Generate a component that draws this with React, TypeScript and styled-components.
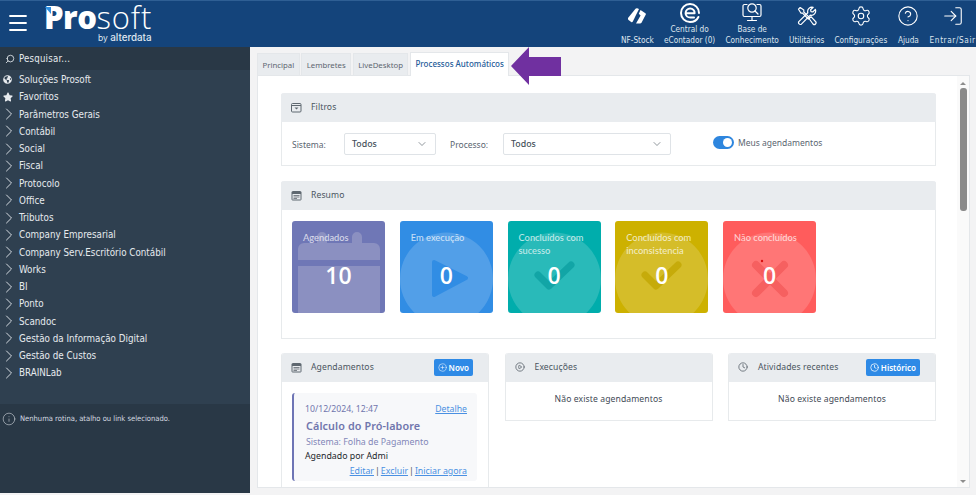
import React from "react";
import styled, { createGlobalStyle } from "styled-components";
import { FaGlobeAmericas, FaStar } from "react-icons/fa";
import { ChevronDown, ChevronRight, CircleHelp, Clock, Info, LogIn, Menu, Search, Settings, PlayCircle, CirclePlus } from "lucide-react";

const Global = createGlobalStyle`
  html, body { margin: 0; padding: 0; width: 976px; height: 495px; overflow: hidden; background: #fff; }
  * { box-sizing: border-box; }
  body { font-family: "Noto Sans", "Open Sans", sans-serif; }
`;

const tahoma = `"DejaVu Sans Condensed", "Noto Sans", sans-serif`;

const Page = styled.div`
  width: 976px; height: 495px; display: flex; flex-direction: column; overflow: hidden;
  position: relative; background: #f3f3f4;
`;
const Header = styled.header`
  height: 47px; flex: none; display: flex; background: #14447b; border-top: 1px solid #2f5f94; color: #fff;
`;
const Burger = styled.div`
  width: 44px; flex: none; padding: 10px 0 0 6px; color: #fff;
`;
const Logo = styled.div`
  width: 577px; flex: none; display: flex; flex-direction: column; position: relative; padding-top: 1px;
`;
const LogoWord = styled.div`
  font-family: "Open Sans", sans-serif; font-size: 31px; line-height: 31px; font-weight: 300; letter-spacing: .9px; color: #fff; height: 31px;
  b { font-weight: 800; letter-spacing: -.5px; }
`;
const LogoBy = styled.div`
  font-family: "Inter", sans-serif; font-size: 8.5px; line-height: 10px; height: 10px; color: #dfe7f0; padding-left: 54px; white-space: nowrap;
  b { font-weight: 500; font-size: 9.8px; }
`;
const Notch = styled.i`
  position: absolute; left: 1px; top: 6px; width: 6px; height: 7px; background: #2f8ee0; clip-path: polygon(0 0, 100% 0, 100% 100%);
`;
const Nav = styled.nav`
  display: flex; gap: 10.2px; flex: none;
`;
const NavItem = styled.div`
  display: flex; flex-direction: column; align-items: center; height: 46px; padding-bottom: 1px; flex: none;
`;
const NavIcon = styled.div<{ $two?: boolean }>`
  height: ${p => (p.$two ? 24 : 30)}px; display: flex; align-items: center; justify-content: center; color: #fff;
`;
const NavLabel = styled.div<{ $wide?: boolean }>`
  margin-top: auto; font-family: ${tahoma}; font-size: 8.2px; line-height: 11px; text-align: center; white-space: nowrap; color: #dfe6ef;
  letter-spacing: ${p => (p.$wide ? ".6px" : "0")};
`;
const Body = styled.div`
  flex: 1; display: flex; min-height: 0;
`;
const Sidebar = styled.aside`
  width: 250px; flex: none; display: flex; flex-direction: column; background: #2f4050; color: #e6eaee;
  margin-bottom: 2px; font-family: ${tahoma};
`;
const SearchRow = styled.div`
  height: 23px; flex: none; display: flex; align-items: center; gap: 4px; padding-left: 5px; background: #293846;
  font-size: 9.6px; letter-spacing: .2px;
`;
const MenuList = styled.ul`
  list-style: none; margin: 0; padding: 1px 0 0; height: 334px; flex: none;
`;
const MenuRow = styled.li`
  height: 17.26px; display: flex; align-items: center; font-size: 9.75px; white-space: nowrap;
`;
const MenuIcon = styled.span`
  width: 19px; flex: none; display: flex; align-items: center; padding-left: 3px; color: #e6eaee;
`;
const Chevron = styled(ChevronRight)`
  flex: none; margin-left: -4.5px; color: #d5dbe1;
`;
const SearchGlyph = styled(Search)`
  flex: none; transform: scaleX(-1);
`;
const Foot = styled.div`
  flex: 1; background: #293846; display: flex; align-items: flex-start; gap: 4px; padding: 8px 0 0 2px;
  font-size: 7.55px; line-height: 14px; color: #d5dbe1; white-space: nowrap;
`;
const Main = styled.main`
  flex: 1; min-width: 0; display: flex; flex-direction: column; padding: 6px 6px 7px 7px;
`;
const Tabs = styled.div`
  height: 22px; flex: none; display: flex; gap: 1.5px; position: relative;
`;
const Tab = styled.div<{ $on?: boolean }>`
  display: flex; align-items: center; padding: 0 4.5px ${p => (p.$on ? "3px" : "0")};
  font-size: ${p => (p.$on ? "8px" : "7.8px")}; white-space: nowrap;
  color: ${p => (p.$on ? "#1f5c99" : "#5d6670")};
  background: ${p => (p.$on ? "#fff" : "#e9ecef")};
  border: 1px solid #e4e7ea; border-bottom: 0;
  font-weight: ${p => (p.$on ? 500 : 400)};
  height: ${p => (p.$on ? "24px" : "22px")};
  margin-top: ${p => (p.$on ? "-1px" : "0")};
  position: relative; z-index: 1;
`;
const Pane = styled.div`
  flex: 1; min-height: 0; display: flex; background: #fff; border: 1px solid #e4e7ea; overflow: hidden;
`;
const Scroller = styled.div`
  flex: 1; min-width: 0; padding: 17px 21px 0 23px; display: flex; flex-direction: column; overflow: hidden;
`;
const Track = styled.div`
  width: 12px; flex: none; background: #fafafa; display: flex; flex-direction: column; align-items: center; padding: 6px 0 4px;
`;
const Tri = styled.i<{ $down?: boolean }>`
  width: 0; height: 0; border-left: 3px solid transparent; border-right: 3px solid transparent;
  ${p => (p.$down ? "border-top: 3px solid #8d8d8d; margin-top: auto;" : "border-bottom: 3px solid #8d8d8d;")}
`;
const Thumb = styled.div`
  width: 7px; height: 123px; margin-top: 3px; background: #8a8a8a; border-radius: 3px;
`;
const Panel = styled.section<{ $h?: number; $gap?: number }>`
  border: 1px solid #e7eaec; border-top: 0; border-radius: 3px 3px 0 0; background: #fff; flex: none;
  ${p => (p.$h ? `height: ${p.$h}px;` : "")}
  ${p => (p.$gap ? `margin-top: ${p.$gap}px;` : "")}
`;
const PanelHead = styled.div`
  height: 29px; margin: 0 -1px; display: flex; align-items: center; background: #e9ecef; border-radius: 3px 3px 0 0;
  padding: 0 16px 1px 10px; font-size: 8.6px; color: #4a5560; letter-spacing: .1px; white-space: nowrap;
`;
const HeadIcon = styled.span`
  width: 20px; flex: none; display: flex; color: #5f6870;
`;
const HeadBtn = styled.div`
  margin-left: auto; height: 17px; padding: 0 4px; background: #2e8ae6; border-radius: 2px; color: #fff; font-size: 8px; font-weight: 600;
  display: flex; align-items: center; gap: 2px; letter-spacing: 0;
`;
const FilterBody = styled.div`
  height: 43px; display: flex; align-items: center; padding: 0 0 0 10px; font-size: 8.5px; color: #5a6570;
`;
const FieldLabel = styled.span<{ $w: number; $left?: number }>`
  width: ${p => p.$w}px; flex: none; padding: 2px 0 0 ${p => p.$left ?? 0}px;
`;
const Select = styled.div<{ $w: number }>`
  width: ${p => p.$w}px; height: 22px; flex: none; display: flex; align-items: center; justify-content: space-between;
  border: 1px solid #dfe3e7; border-radius: 2px; padding: 0 7px; font-size: 8.8px; font-weight: 500; color: #46505a; background: #fff;
`;
const Toggle = styled.span`
  width: 21px; height: 13px; border-radius: 7px; background: #2e86de; position: relative; flex: none; margin: -2px 4px 0 42px;
  &::after { content: ""; position: absolute; right: 2px; top: 2px; width: 9px; height: 9px; border-radius: 50%; background: #fff; }
`;
const ToggleLabel = styled.span`
  margin-top: -3px; white-space: nowrap;
`;
const Stats = styled.div`
  display: flex; gap: 14.75px; padding: 11px 10px 0;
`;
const Stat = styled.div<{ $bg: string }>`
  width: 93px; height: 92px; flex: none; border-radius: 3px; background: ${p => p.$bg}; position: relative; overflow: hidden; color: #fff;
  display: flex; flex-direction: column; align-items: center; padding: 10px 8px 0 11px;
`;
const StatArt = styled.svg`
  position: absolute; left: 0; top: 0; width: 93px; height: 92px;
`;
const StatTitle = styled.div`
  font-family: "Lato", sans-serif; width: 100%; height: 28px; font-size: 9.3px; line-height: 13px; color: rgba(255,255,255,.72); position: relative; font-weight: 500;
`;
const StatNum = styled.div`
  font-family: "Open Sans", sans-serif; font-size: 23px; line-height: 28px; font-weight: 600; position: relative; margin: 2px 0 0 -3px;
`;
const Columns = styled.div`
  display: flex; justify-content: space-between; align-items: flex-start; margin-top: 14px; flex: none;
`;
const Column = styled(Panel)`
  width: 208px; overflow: hidden;
`;
const Empty = styled.div`
  height: 38px; padding-top: 10.5px; text-align: center; font-size: 8.6px; color: #3f4a55; letter-spacing: .1px;
`;
const AgendaBody = styled.div`
  padding: 11px 11px 0 10px; height: 110px;
`;
const Entry = styled.article`
  background: #f7f8fa; border-left: 2px solid #6e75b5; border-radius: 3px; height: 88px; padding: 10px 10px 0 11px;
`;
const EntryTop = styled.div`
  display: flex; justify-content: space-between; font-size: 8.7px; line-height: 13px; color: #7076ad;
`;
const A = styled.span`
  color: #4a90e2; text-decoration: underline;
`;
const EntryTitle = styled.div`
  font-size: 10.8px; line-height: 17px; margin-top: 1px; font-weight: 600; color: #7076ad; letter-spacing: .1px; padding-left: 1px;
`;
const EntryLine = styled.div<{ $dark?: boolean }>`
  font-size: 8.8px; line-height: 13px; color: ${p => (p.$dark ? "#22272c" : "#8287b8")}; margin-top: ${p => (p.$dark ? "1px" : "2px")};
  padding-left: ${p => (p.$dark ? 0 : "1px")};
`;
const EntryLinks = styled.div`
  display: flex; justify-content: flex-end; font-size: 8.8px; line-height: 13px; margin-top: 2px; color: #555; gap: 1px; white-space: nowrap;
`;
const Arrow = styled.svg`
  position: absolute; left: 510px; top: 46px; width: 52px; height: 40px; z-index: 2;
`;

const menu = ["Parâmetros Gerais","Contábil","Social","Fiscal","Protocolo","Office","Tributos","Company Empresarial","Company Serv.Escritório Contábil","Works","BI","Ponto","Scandoc","Gestão da Informação Digital","Gestão de Custos","BRAINLab"];

const stroke = { fill: "none", stroke: "#fff", strokeWidth: 1.5, strokeLinecap: "round" as const, strokeLinejoin: "round" as const };

const NfIcon = () => (
  <svg width="18" height="16" viewBox="0 0 18 16">
    <path d="M0 10 L7.5 .8 Q8.2 0 9.2 .3 L11 1 L4.8 13.5 Q4.2 14.6 3.2 14 L.5 12 Q-.4 11.2 0 10 Z" fill="#fff" />
    <path d="M12.5 2 L17.4 5.2 Q18.2 5.8 17.8 6.6 L13.5 14.8 Q13 15.6 12 15.6 L8 15.6 L12.6 7.4 L10.8 5.8 Z" fill="#fff" />
  </svg>
);
const EIcon = () => (
  <svg width="20" height="20" viewBox="0 0 20 20" {...stroke} strokeWidth={2}>
    <path d="M6 10.2 H14.6 C14.8 7.4 12.8 5.6 10.2 5.6 C7.6 5.6 5.6 7.6 5.6 10.2 C5.6 12.8 7.6 14.6 10.4 14.6 H14" />
    <path d="M18.4 14 C17 17 14 19 10 19 C5 19 1 15 1 10 C1 5 5 1 10 1 C15 1 19 5 19 10" />
  </svg>
);
const KbIcon = () => (
  <svg width="20" height="20" viewBox="0 0 20 20" {...stroke} strokeWidth={1.2}>
    <path d="M5 1.5 H2.5 A1.5 1.5 0 0 0 1 3 V12 A1.5 1.5 0 0 0 2.5 13.5 H17.5 A1.5 1.5 0 0 0 19 12 V3 A1.5 1.5 0 0 0 17.5 1.5 H15" />
    <circle cx="10" cy="5" r="4.2" /><path d="M13 8 L16 11" /><path d="M10 13.5 V17 M5.5 17.5 H14.5" />
  </svg>
);
const ToolsIcon = () => (
  <svg width="20" height="20" viewBox="0 0 20 20" {...stroke} strokeWidth={1.2}>
    <path d="M1.5 3.2 L3.2 1.5 L6.8 4 V6 L12.5 11.7 L11.3 13 L5.6 7.2 H4 Z" />
    <path d="M12 12.5 L14 10.7 L18.5 15.5 A1.6 1.6 0 0 1 16 18 Z" />
    <path d="M18.4 3.4 L15.8 6 L14 5.6 L13.6 3.8 L16.2 1.3 A4.4 4.4 0 0 0 10.8 6.7 L1.8 15.6 A1.9 1.9 0 0 0 4.4 18.2 L13.3 9.2 A4.4 4.4 0 0 0 18.4 3.4 Z" />
  </svg>
);
const FilterIcon = () => (
  <svg width="11" height="11" viewBox="0 0 11 11" fill="none" stroke="currentColor"><rect x=".5" y="1.5" width="9.5" height="8.5" rx="1"/><path d="M.5 3.5 H10" /><path d="M3.5 5.5 H7.5 L5.5 7.5 Z" fill="currentColor" stroke="none"/></svg>
);
const CalIcon = () => (
  <svg width="11" height="11" viewBox="0 0 11 11" fill="none" stroke="currentColor"><rect x="1" y="1.5" width="9" height="8.5" rx=".5"/><path d="M1 3 H10" strokeWidth="2"/><path d="M2.5 5.5 H8.5 M2.5 7 H8.5 M2.5 8.5 H6" strokeWidth=".8"/></svg>
);

const items: { label: React.ReactNode; icon: React.ReactNode; two?: boolean; wide?: boolean }[] = [
  { label: "NF-Stock", icon: <NfIcon /> },
  { label: <>Central do<br />eContador (0)</>, icon: <EIcon />, two: true },
  { label: <>Base de<br />Conhecimento</>, icon: <KbIcon />, two: true },
  { label: "Utilitários", icon: <ToolsIcon /> },
  { label: "Configurações", icon: <Settings size={22} strokeWidth={1.2} /> },
  { label: "Ajuda", icon: <CircleHelp size={22} strokeWidth={1.2} /> },
  { label: "Entrar/Sair", icon: <LogIn size={22} strokeWidth={1.2} />, wide: true },
];

const Circle = () => <circle cx="46.5" cy="58" r="46.5" fill="rgba(255,255,255,.16)" />;
const Check = ({ c }: { c: string }) => <path d="M30 54 L41 65 L63 44" fill="none" stroke={c} strokeWidth="7" strokeLinecap="round" strokeLinejoin="round" />;

export default function App() {
  return (
    <Page>
      <Global />
      <Header>
        <Burger><Menu size={24} strokeWidth={1.8} /></Burger>
        <Logo>
          <Notch />
          <LogoWord><b>Pro</b>soft</LogoWord>
          <LogoBy>by <b>alterdata</b></LogoBy>
        </Logo>
        <Nav>
          {items.map((it, i) => (
            <NavItem key={i}>
              <NavIcon $two={it.two}>{it.icon}</NavIcon>
              <NavLabel $wide={it.wide}>{it.label}</NavLabel>
            </NavItem>
          ))}
        </Nav>
      </Header>
      <Body>
        <Sidebar>
          <SearchRow><SearchGlyph size={10} />Pesquisar...</SearchRow>
          <MenuList>
            <MenuRow><MenuIcon><FaGlobeAmericas size={9} /></MenuIcon>Soluções Prosoft</MenuRow>
            <MenuRow><MenuIcon><FaStar size={10} /></MenuIcon>Favoritos</MenuRow>
            {menu.map(m => <MenuRow key={m}><MenuIcon><Chevron size={20} strokeWidth={1.2} /></MenuIcon>{m}</MenuRow>)}
          </MenuList>
          <Foot><Info size={14} strokeWidth={1} />Nenhuma rotina, atalho ou link selecionado.</Foot>
        </Sidebar>
        <Main>
          <Tabs>
            <Tab>Principal</Tab>
            <Tab>Lembretes</Tab>
            <Tab>LiveDesktop</Tab>
            <Tab $on>Processos Automáticos</Tab>
          </Tabs>
          <Pane>
            <Scroller>
              <Panel>
                <PanelHead><HeadIcon><FilterIcon /></HeadIcon>Filtros</PanelHead>
                <FilterBody>
                  <FieldLabel $w={52}>Sistema:</FieldLabel>
                  <Select $w={92}>Todos<ChevronDown size={12} strokeWidth={1.2} /></Select>
                  <FieldLabel $w={67} $left={14}>Processo:</FieldLabel>
                  <Select $w={168}>Todos<ChevronDown size={12} strokeWidth={1.2} /></Select>
                  <Toggle />
                  <ToggleLabel>Meus agendamentos</ToggleLabel>
                </FilterBody>
              </Panel>
              <Panel $h={158} $gap={15}>
                <PanelHead><HeadIcon><CalIcon /></HeadIcon>Resumo</PanelHead>
                <Stats>
                  <Stat $bg="#6f77b6">
                    <StatArt viewBox="0 0 93 92">
                      <path d="M6 38 V28 A6 6 0 0 1 12 22 H25 V16 A5 5 0 0 1 35 16 V22 H60 V16 A5 5 0 0 1 70 16 V22 H82 A6 6 0 0 1 88 28 V39 H6 Z M6 45 H88 V92 H6 Z" fill="#8b90c1" />
                    </StatArt>
                    <StatTitle>Agendados</StatTitle>
                    <StatNum>10</StatNum>
                  </Stat>
                  <Stat $bg="#318de4">
                    <StatArt viewBox="0 0 93 92">
                      <Circle />
                      <path d="M34 41 L66 57 L34 74 Z" fill="#318de4" stroke="#318de4" strokeWidth="4" strokeLinejoin="round" />
                    </StatArt>
                    <StatTitle>Em execução</StatTitle>
                    <StatNum>0</StatNum>
                  </Stat>
                  <Stat $bg="#00adac">
                    <StatArt viewBox="0 0 93 92"><Circle /><Check c="#12a5a6" /></StatArt>
                    <StatTitle>Concluídos com sucesso</StatTitle>
                    <StatNum>0</StatNum>
                  </Stat>
                  <Stat $bg="#cdb100">
                    <StatArt viewBox="0 0 93 92"><Circle /><Check c="#c6ab0a" /></StatArt>
                    <StatTitle>Concluídos com inconsistencia</StatTitle>
                    <StatNum>0</StatNum>
                  </Stat>
                  <Stat $bg="#ff5c5c">
                    <StatArt viewBox="0 0 93 92">
                      <Circle />
                      <path d="M33 44 L61 72 M61 44 L33 72" stroke="#f66060" strokeWidth="8" strokeLinecap="round" />
                      <circle cx="39" cy="40" r="1.2" fill="#d81010" />
                    </StatArt>
                    <StatTitle>Não concluídos</StatTitle>
                    <StatNum>0</StatNum>
                  </Stat>
                </Stats>
              </Panel>
              <Columns>
                <Column>
                  <PanelHead><HeadIcon><CalIcon /></HeadIcon>Agendamentos<HeadBtn><CirclePlus size={9} strokeWidth={1.4} />Novo</HeadBtn></PanelHead>
                  <AgendaBody>
                    <Entry>
                      <EntryTop><span>10/12/2024, 12:47</span><A>Detalhe</A></EntryTop>
                      <EntryTitle>Cálculo do Pró-labore</EntryTitle>
                      <EntryLine>Sistema: Folha de Pagamento</EntryLine>
                      <EntryLine $dark>Agendado por Admi</EntryLine>
                      <EntryLinks><A>Editar</A><span>|</span><A>Excluir</A><span>|</span><A>Iniciar agora</A></EntryLinks>
                    </Entry>
                  </AgendaBody>
                </Column>
                <Column>
                  <PanelHead><HeadIcon><PlayCircle size={10} /></HeadIcon>Execuções</PanelHead>
                  <Empty>Não existe agendamentos</Empty>
                </Column>
                <Column>
                  <PanelHead><HeadIcon><Clock size={10} /></HeadIcon>Atividades recentes<HeadBtn><Clock size={9} />Histórico</HeadBtn></PanelHead>
                  <Empty>Não existe agendamentos</Empty>
                </Column>
              </Columns>
            </Scroller>
            <Track><Tri /><Thumb /><Tri $down /></Track>
          </Pane>
        </Main>
      </Body>
      <Arrow viewBox="0 0 52 40">
        <path d="M1 20 L19 1 V11 H51 V30 H19 V39 Z" fill="#7030a0" />
      </Arrow>
    </Page>
  );
}
